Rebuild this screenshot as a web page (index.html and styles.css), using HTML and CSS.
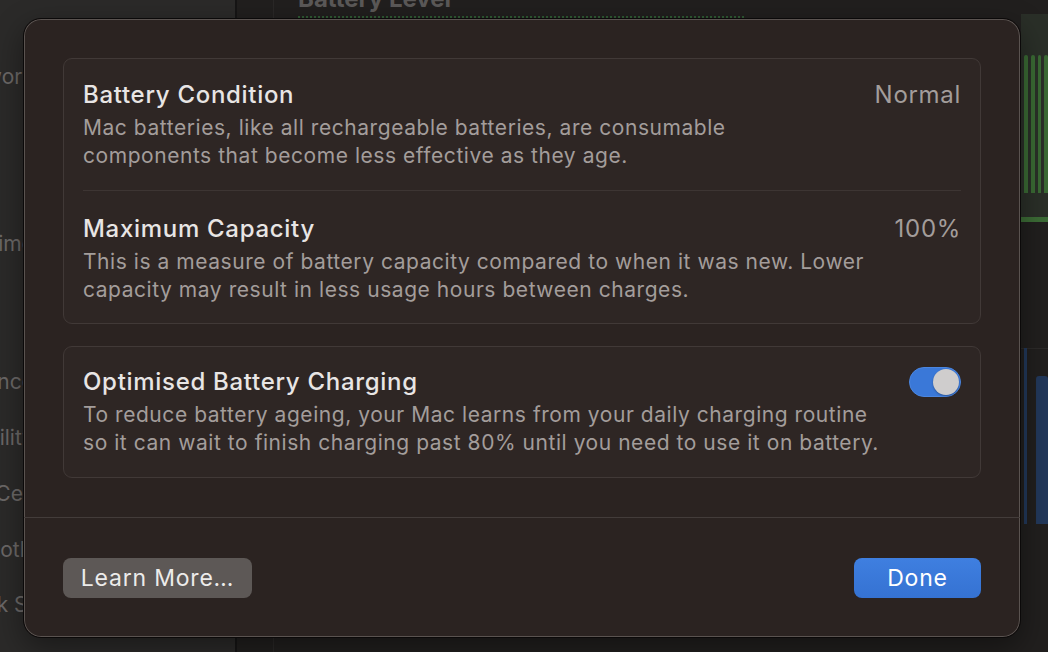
FILE: index.html
```html
<!DOCTYPE html>
<html lang="en">
<head>
    <meta charset="UTF-8">
    <meta name="viewport" content="width=device-width, initial-scale=1.0">
    <title>Battery Health</title>
    <link rel="stylesheet" href="styles.css">
</head>
<body>
    <div class="window">
        <div class="sidebar">
            <div class="side-item"><span>Network</span></div>
            <div class="side-item"></div>
            <div class="side-item"></div>
            <div class="side-item"><span>Screen Time</span></div>
            <div class="side-item"></div>
            <div class="side-item group"><span>Appearance</span></div>
            <div class="side-item"><span>Accessibility</span></div>
            <div class="side-item long"><span>Control Centre</span></div>
            <div class="side-item long"><span>Siri &amp; Spotlight</span></div>
            <div class="side-item longer"><span>Lock Screen</span></div>
        </div>

        <div class="main">
            <div class="main-inner">
                <h2 class="section-title">Battery Level</h2>
                <div class="level-line"></div>
            </div>
            <div class="chart-edge">
                <div class="green-chart">
                    <div class="bars">
                        <span></span><span></span><span></span><span></span>
                    </div>
                    <div class="green-base"></div>
                </div>
                <div class="usage-chart">
                    <div class="blue-bar"></div>
                    <div class="blue-bar"></div>
                </div>
            </div>
        </div>
    </div>

    <div class="sheet">
        <div class="sheet-body">
            <div class="card">
                <div class="row">
                    <div class="row-text">
                        <div class="row-title">Battery Condition</div>
                        <div class="row-desc">Mac batteries, like all rechargeable batteries, are consumable<br>components that become less effective as they age.</div>
                    </div>
                    <div class="row-value">Normal</div>
                </div>
                <div class="row">
                    <div class="row-text">
                        <div class="row-title">Maximum Capacity</div>
                        <div class="row-desc">This is a measure of battery capacity compared to when it was new. Lower<br>capacity may result in less usage hours between charges.</div>
                    </div>
                    <div class="row-value">100%</div>
                </div>
            </div>

            <div class="card">
                <div class="row">
                    <div class="row-text">
                        <div class="row-title">Optimised Battery Charging</div>
                        <div class="row-desc">To reduce battery ageing, your Mac learns from your daily charging routine<br>so it can wait to finish charging past 80% until you need to use it on battery.</div>
                    </div>
                    <div class="toggle on"><span class="knob"></span></div>
                </div>
            </div>
        </div>

        <div class="sheet-footer">
            <button class="btn btn-secondary">Learn More…</button>
            <button class="btn btn-primary">Done</button>
        </div>
    </div>
</body>
</html>
```

FILE: styles.css
```css
* {
    margin: 0;
    padding: 0;
    box-sizing: border-box;
}

body {
    font-family: Inter, "Noto Sans", sans-serif;
    background: #1f1d1c;
    color: #e6e3e2;
    width: 1048px;
    height: 652px;
    overflow: hidden;
    position: relative;
}

/* window behind the sheet */

.window {
    display: grid;
    grid-template-columns: 237px 1fr;
    height: 100%;
}

.sidebar {
    background: #2b2a29;
    border-right: 2px solid #161515;
    padding-top: 63px;
    overflow: hidden;
}

.side-item {
    height: 55.7px;
    width: 34px;
    display: flex;
    justify-content: flex-end;
    font-size: 21px;
    line-height: 28px;
    color: #6b6867;
    white-space: nowrap;
}

.side-item.long {
    width: 62px;
}

.side-item.longer {
    width: 84px;
}

.side-item span {
    flex-shrink: 0;
}

.side-item.group {
    margin-top: 27px;
}

.main {
    display: flex;
    background: #211f1e;
}

.main-inner {
    flex: 1;
    border-left: 1px solid #2a2827;
    margin-left: 36px;
    padding-left: 24px;
}

.section-title {
    font-size: 24px;
    font-weight: 700;
    color: #5b5958;
    line-height: 20px;
    margin-top: -11px;
}

.level-line {
    margin-top: 7px;
    width: 446px;
    border-top: 2px dotted #2f5a33;
}

.chart-edge {
    width: 27px;
}

.green-chart {
    margin-top: 14px;
    height: 208px;
    background: #2a2f28;
    display: flex;
    flex-direction: column;
}

.bars {
    flex: 1;
    display: flex;
    gap: 3px;
    padding: 41px 0 24px 3px;
}

.bars span {
    width: 5px;
    background: #3a6a34;
    border-radius: 3px 3px 0 0;
}

.green-base {
    height: 5px;
    background: #3c6c36;
}

.usage-chart {
    margin-top: 126px;
    height: 176px;
    display: flex;
    align-items: flex-end;
    gap: 9px;
    padding-left: 3px;
    border-top: 1px solid #2c2a29;
}

.blue-bar {
    width: 3px;
    height: 176px;
    background: #22385a;
}

.blue-bar + .blue-bar {
    width: 12px;
    height: 148px;
    border-radius: 3px 3px 0 0;
}

/* sheet */

.sheet {
    position: absolute;
    left: 23px;
    top: 18px;
    width: 998px;
    height: 620px;
    background: #2b2321;
    border: 1px solid #0b0909;
    border-radius: 18px;
    box-shadow: inset 0 0 0 1px #5a5350, 0 10px 30px rgba(0,0,0,0.4);
    display: flex;
    flex-direction: column;
}

.sheet-body {
    padding: 39px 39px 0;
    display: flex;
    flex-direction: column;
    gap: 22px;
    height: 499px;
    border-bottom: 1px solid #433c3a;
}

.card {
    background: #2e2624;
    border: 1px solid #413937;
    border-radius: 9px;
    padding: 0 19px;
}

.row {
    display: flex;
    justify-content: space-between;
    align-items: flex-start;
    padding: 20px 0;
}

.card:first-child .row:first-child {
    padding-top: 21px;
}

.row + .row {
    border-top: 1px solid #3d3533;
    padding-top: 23px;
    padding-bottom: 19px;
}

.row-title {
    font-size: 24px;
    line-height: 30px;
    font-weight: 500;
    letter-spacing: 0.7px;
    color: #e8e5e4;
    margin-bottom: 4px;
}

.row-desc {
    font-size: 21px;
    line-height: 28px;
    letter-spacing: 0.55px;
    color: #a39d9b;
}

.row-value {
    font-size: 24px;
    line-height: 30px;
    letter-spacing: 0.7px;
    color: #a39d9b;
}

.toggle {
    width: 52px;
    height: 30px;
    border-radius: 15px;
    background: #3a78d8;
    border: 1px solid #4b86e0;
    display: flex;
    align-items: center;
    justify-content: flex-end;
    padding: 1px;
}

.knob {
    width: 26px;
    height: 26px;
    border-radius: 50%;
    background: #cfcdcd;
    box-shadow: 0 1px 2px rgba(0,0,0,0.3);
}

.sheet-footer {
    flex: 1;
    display: flex;
    justify-content: space-between;
    align-items: center;
    padding: 0 39px;
}

.btn {
    font-family: Inter, "Noto Sans", sans-serif;
    font-size: 23px;
    letter-spacing: 0.8px;
    height: 40px;
    border: none;
    border-radius: 8px;
    color: #ecebea;
    cursor: pointer;
}

.btn-secondary {
    width: 189px;
    background: #5d5856;
}

.btn-primary {
    width: 127px;
    background: linear-gradient(#3f7fe0, #3572d2);
    color: #fff;
}
```
